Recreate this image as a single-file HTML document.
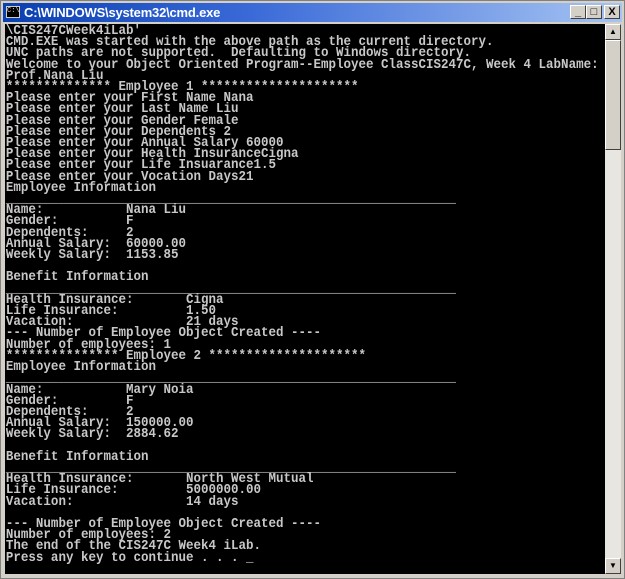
<!DOCTYPE html>
<html><head><style>
html,body{margin:0;padding:0;width:625px;height:579px;overflow:hidden;background:#d4d0c8}
.win{position:absolute;left:0;top:0;width:623px;height:577px;border:1px solid #808080;background:#d4d0c8}
.title{position:absolute;left:2px;top:2px;width:619px;height:19px;background:linear-gradient(90deg,#0a3fb0 0%,#3a6ad8 40%,#a6c4f2 100%)}
.title .ic{position:absolute;left:3px;top:3px;width:14px;height:12px;background:#000;border:1px solid #ccc;box-sizing:border-box;color:#ddd;font:7px "Liberation Mono",monospace;line-height:9px;text-align:center}
.title .t{position:absolute;left:21px;top:2px;color:#fff;font:bold 13px "Liberation Sans",sans-serif;letter-spacing:-0.2px}
.btn{position:absolute;top:2px;width:16px;height:14px;background:#d4d0c8;box-sizing:border-box;border:1px solid;border-color:#fff #404040 #404040 #fff;font:bold 11px "Liberation Sans",sans-serif;text-align:center;line-height:12px;color:#000}
.con{position:absolute;left:4px;top:23px;width:600px;height:550px;background:#000;overflow:hidden}
pre{margin:0;padding:2px 0 0 1px;color:#c8c8c8;font:bold 13.5px/11.2px "Liberation Mono",monospace;white-space:pre;transform:scaleX(0.926);transform-origin:0 0}
.sb{position:absolute;left:604px;top:23px;width:16px;height:550px;background:#e8e6e0}
.sb .a{position:absolute;left:0;width:16px;height:16px;background:#d4d0c8;box-sizing:border-box;border:1px solid;border-color:#fff #404040 #404040 #fff;font:8px "Liberation Sans",sans-serif;text-align:center;line-height:14px}
.thumb{position:absolute;left:0;top:16px;width:16px;height:110px;background:#d4d0c8;box-sizing:border-box;border:1px solid;border-color:#fff #404040 #404040 #fff}
</style></head><body>
<div class="win">
<div class="title"><div class="ic">C:\</div><div class="t">C:\WINDOWS\system32\cmd.exe</div>
<div class="btn" style="left:567px">_</div><div class="btn" style="left:583px">□</div><div class="btn" style="left:601px">X</div></div>
<div class="con"><pre>\CIS247CWeek4iLab'
CMD.EXE was started with the above path as the current directory.
UNC paths are not supported.  Defaulting to Windows directory.
Welcome to your Object Oriented Program--Employee ClassCIS247C, Week 4 LabName:
Prof.Nana Liu
************** Employee 1 *********************
Please enter your First Name Nana
Please enter your Last Name Liu
Please enter your Gender Female
Please enter your Dependents 2
Please enter your Annual Salary 60000
Please enter your Health InsuranceCigna
Please enter your Life Insuarance1.5
Please enter your Vocation Days21
Employee Information
____________________________________________________________
Name:           Nana Liu
Gender:         F
Dependents:     2
Annual Salary:  60000.00
Weekly Salary:  1153.85

Benefit Information
____________________________________________________________
Health Insurance:       Cigna
Life Insurance:         1.50
Vacation:               21 days
--- Number of Employee Object Created ----
Number of employees: 1
*************** Employee 2 *********************
Employee Information
____________________________________________________________
Name:           Mary Noia
Gender:         F
Dependents:     2
Annual Salary:  150000.00
Weekly Salary:  2884.62

Benefit Information
____________________________________________________________
Health Insurance:       North West Mutual
Life Insurance:         5000000.00
Vacation:               14 days

--- Number of Employee Object Created ----
Number of employees: 2
The end of the CIS247C Week4 iLab.
Press any key to continue . . . _</pre></div>
<div class="sb"><div class="a" style="top:0">▲</div><div class="thumb"></div><div class="a" style="bottom:0">▼</div></div>
</div>
</body></html>
